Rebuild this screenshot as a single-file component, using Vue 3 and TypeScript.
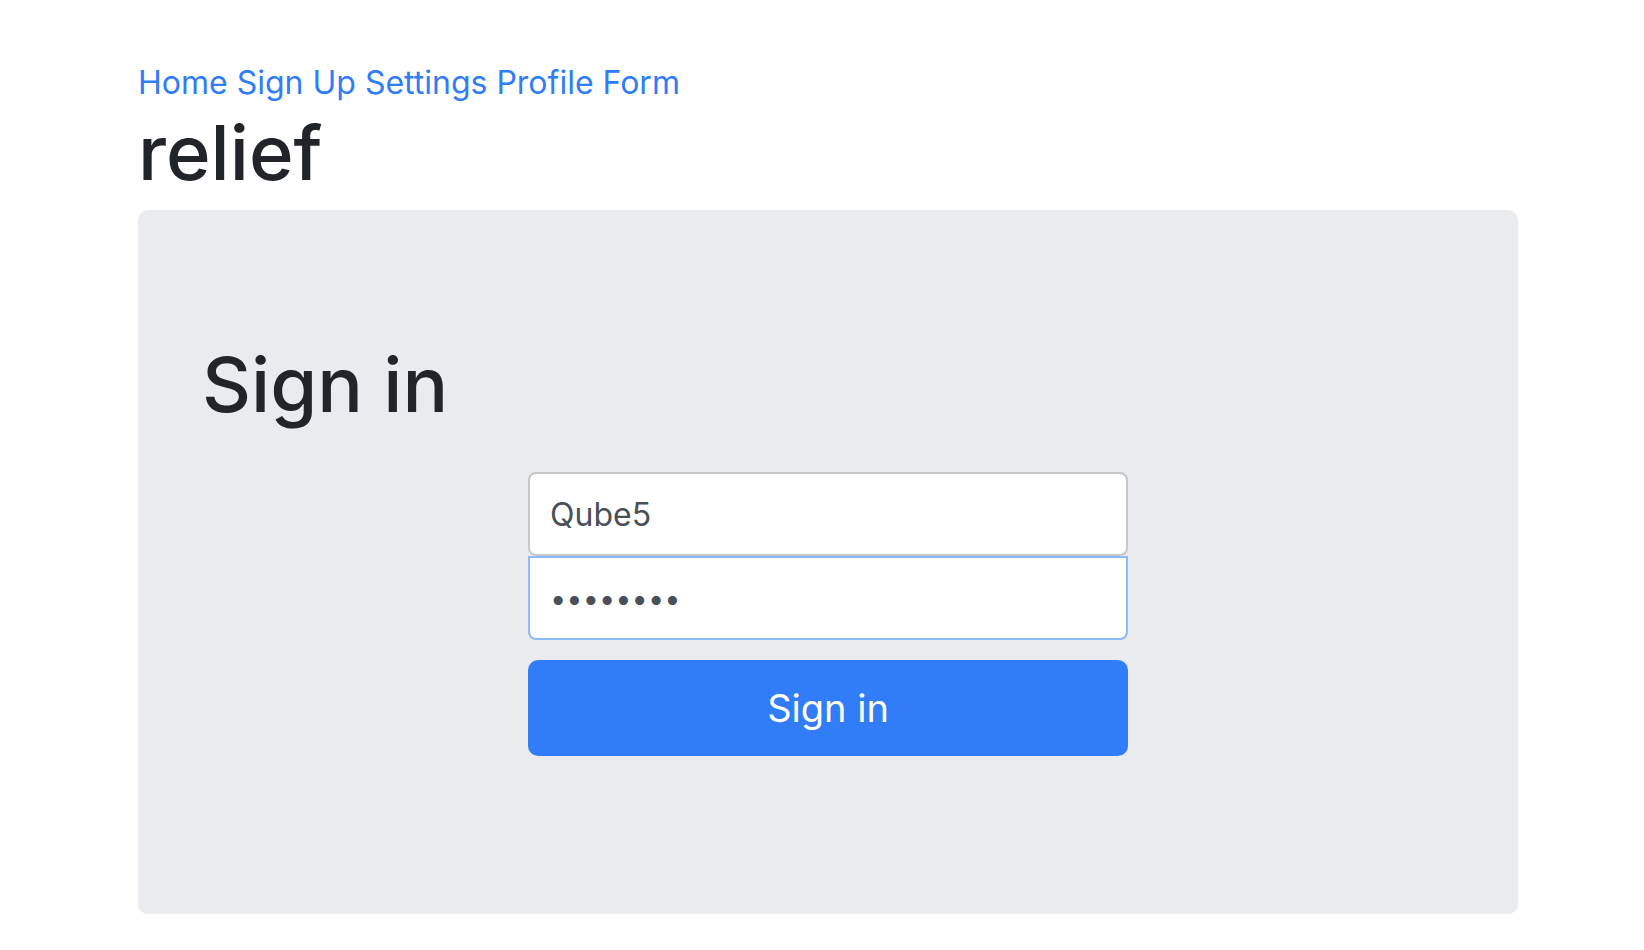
<script setup lang="ts">
import { ref } from 'vue'

const links = ['Home', 'Sign Up', 'Settings', 'Profile', 'Form']
const username = ref<string>('Qube5')
const password = ref<string>('password')
</script>

<template>
  <div class="container">
    <header>
      <nav>
        <template v-for="link in links" :key="link"><a href="#">{{ link }}</a>{{ ' ' }}</template>
      </nav>
      <h1>relief</h1>
    </header>
    <main class="panel">
      <h2>Sign in</h2>
      <form @submit.prevent>
        <input v-model="username" class="field" type="text" aria-label="Username" />
        <input v-model="password" class="field active" type="password" aria-label="Password" />
        <button type="submit">Sign in</button>
      </form>
    </main>
  </div>
</template>

<style>
body {
  margin: 0;
  background: #fff;
}
</style>

<style scoped>
.container {
  box-sizing: border-box;
  margin: 0 auto;
  padding: 60px 126px 36px 138px;
  font-family: Inter, "Liberation Sans", sans-serif;
  font-size: 32px;
  line-height: 46px;
  color: #212529;
}
nav a {
  color: #317cf7;
  text-decoration: none;
}
h1,
h2 {
  margin: 0;
  font-size: 76px;
  line-height: 92px;
  font-weight: 500;
}
h1 {
  margin-bottom: 12px;
}
.panel {
  padding: 128px 64px 158px;
  background: #eaebef;
  border-radius: 10px;
}
form {
  display: flex;
  flex-direction: column;
  max-width: 600px;
  margin: 42px auto 0;
}
.field {
  box-sizing: border-box;
  width: 100%;
  height: 84px;
  padding: 0 20px;
  border: 2px solid #c5c7c9;
  border-radius: 8px;
  background: #fff;
  color: #495057;
  font: inherit;
  outline: none;
}
.active {
  margin-bottom: 20px;
  border-color: #8bbbfa;
  border-top-left-radius: 0;
  border-top-right-radius: 0;
  font-size: 29px;
}
button {
  height: 96px;
  border: 0;
  border-radius: 10px;
  background: #317cf7;
  color: #fff;
  font: inherit;
  font-size: 38px;
  cursor: pointer;
}
</style>
